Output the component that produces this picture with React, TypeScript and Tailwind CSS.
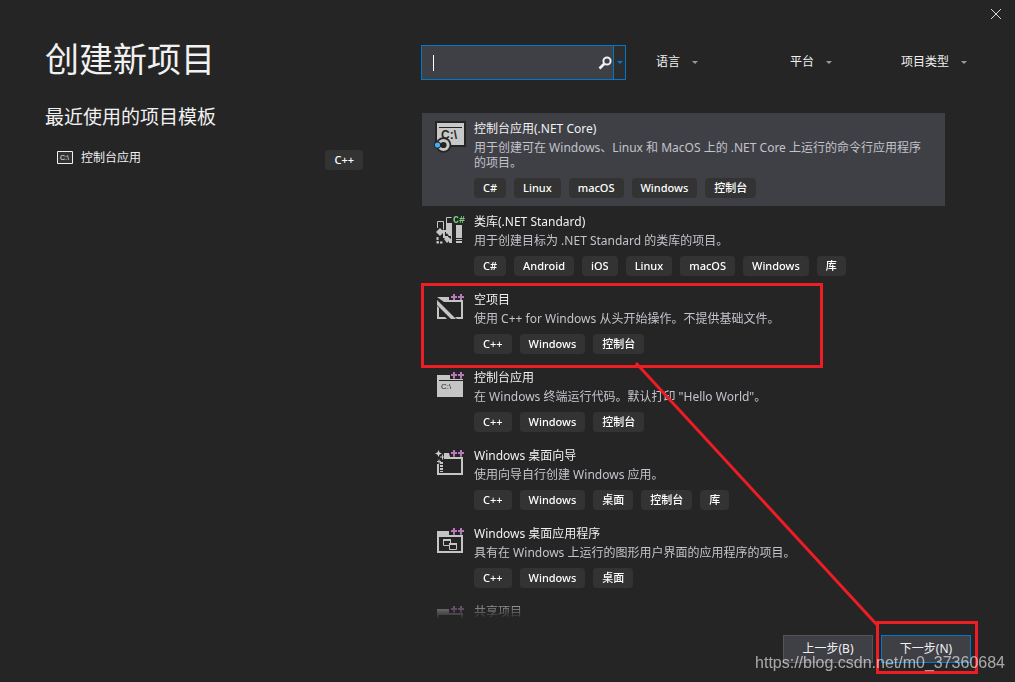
import { useState, type ReactNode } from 'react'

type IconName = 'core' | 'library' | 'empty' | 'console' | 'wizard' | 'desktop' | 'shared'

interface Template {
  icon: IconName
  name: string
  description: string
  tags: string[]
}

const TEMPLATES: Template[] = [
  {
    icon: 'core',
    name: '控制台应用(.NET Core)',
    description: '用于创建可在 Windows、Linux 和 MacOS 上的 .NET Core 上运行的命令行应用程序的项目。',
    tags: ['C#', 'Linux', 'macOS', 'Windows', '控制台'],
  },
  {
    icon: 'library',
    name: '类库(.NET Standard)',
    description: '用于创建目标为 .NET Standard 的类库的项目。',
    tags: ['C#', 'Android', 'iOS', 'Linux', 'macOS', 'Windows', '库'],
  },
  {
    icon: 'empty',
    name: '空项目',
    description: '使用 C++ for Windows 从头开始操作。不提供基础文件。',
    tags: ['C++', 'Windows', '控制台'],
  },
  {
    icon: 'console',
    name: '控制台应用',
    description: '在 Windows 终端运行代码。默认打印 "Hello World"。',
    tags: ['C++', 'Windows', '控制台'],
  },
  {
    icon: 'wizard',
    name: 'Windows 桌面向导',
    description: '使用向导自行创建 Windows 应用。',
    tags: ['C++', 'Windows', '桌面', '控制台', '库'],
  },
  {
    icon: 'desktop',
    name: 'Windows 桌面应用程序',
    description: '具有在 Windows 上运行的图形用户界面的应用程序的项目。',
    tags: ['C++', 'Windows', '桌面'],
  },
  {
    icon: 'shared',
    name: '共享项目',
    description: '',
    tags: [],
  },
]

const FILTERS = ['语言', '平台', '项目类型']

function PlusPlus() {
  return (
    <g>
      <path d="M19 2h2v2h2v2h-2v2h-2v-2h-2v-2h2zM26 2h2v2h2v2h-2v2h-2v-2h-2v-2h2z" fill="#b978bd" />
      <path d="M20 8v2M27 8v2" stroke="#c5c5c5" strokeDasharray="1 1" />
    </g>
  )
}

const ICONS: Record<IconName, ReactNode> = {
  core: (
    <>
      <path d="M1 0h31v26h-31z" fill="#252526" />
      <path d="M3 2h27v22h-27z" fill="#c8c8c8" />
      <path d="M5 6.500h23" stroke="#252526" />
      <text x="7" y="18" fontSize="12" fontWeight="700" fill="#252526" className="font-['Liberation_Sans']">
        C:\
      </text>
      <circle cx="9.500" cy="24" r="7.800" fill="#252526" />
      <circle cx="9.500" cy="24" r="4.600" fill="none" stroke="#c8c8c8" strokeWidth="3" />
      <circle cx="3.500" cy="24" r="3.600" fill="#252526" />
      <circle cx="3.500" cy="24" r="2.600" fill="#3db2f5" />
    </>
  ),
  library: (
    <>
      <path d="M3.500 14v-6.500h6v8" fill="none" stroke="#c5c5c5" />
      <path d="M12.500 12v-8.500h5" fill="none" stroke="#c5c5c5" />
      <path d="M12 9h6v20h-3v-4h2v-3h-2l-3-4z" fill="#c5c5c5" />
      <path d="M22 11h6v18h-6z" fill="#c5c5c5" />
      <path d="M22 24.500h6M22 26.500h6" stroke="#252526" />
      <path d="M6 14l4 4-4 4-4-4z" fill="#c5c5c5" />
      <path d="M8 17h5M10 18v5h4" fill="none" stroke="#c5c5c5" strokeWidth="2" />
      <path d="M12 14l4 3-4 3zM13 22l4 3-4 4-3-4z" fill="#c5c5c5" />
      <path d="M3.500 23v5.500h5" fill="none" stroke="#c5c5c5" strokeWidth="2" strokeDasharray="3 1" />
      <text x="19" y="9" fontSize="10" fontWeight="700" fill="#7bd07b" className="font-['Liberation_Mono']">
        C#
      </text>
    </>
  ),
  empty: (
    <>
      <path d="M3 5h12v3h14v19h-6l-2-2h6v-15h-17zM3 14l2 2v9h6l2 2h-10z" fill="#c5c5c5" />
      <path d="M3 8l19 19h-5l-14-14z" fill="#c5c5c5" />
      <path d="M16 1h15v7h-15z" fill="#252526" />
      <PlusPlus />
    </>
  ),
  console: (
    <>
      <path d="M3 5h13v4h13v18h-26z" fill="#c5c5c5" />
      <path d="M5 10.500h24" stroke="#252526" />
      <text x="7" y="19" fontSize="8" fill="#252526" className="font-['Liberation_Sans']">
        C:\
      </text>
      <PlusPlus />
    </>
  ),
  wizard: (
    <>
      <path d="M10 5h5l1 4h13v18h-26v-11h2v9h22v-14h-17z" fill="#c5c5c5" />
      <path d="M4.500 2l1 2.500 2.500 1-2.500 1-1 2.500-1-2.500-2.500-1 2.500-1z" fill="#d6d6d6" />
      <path d="M8.500 6.500v5M6 9h5M5 11.500v4M3 13.500h4" stroke="#c5c5c5" />
      <path d="M7.500 14v10" stroke="#c5c5c5" strokeWidth="3" strokeDasharray="2 1" />
      <PlusPlus />
    </>
  ),
  desktop: (
    <>
      <path d="M3 5h12v4h14v18h-26zM5 11v14h22v-14z" fill="#c5c5c5" fillRule="evenodd" />
      <path d="M9.500 13.500h7v6h-7z" fill="none" stroke="#c5c5c5" />
      <path d="M15.500 17.500h7v6h-7z" fill="#252526" stroke="#c5c5c5" />
      <path d="M9 14h8M15 18h8" stroke="#c5c5c5" strokeWidth="2" />
      <PlusPlus />
    </>
  ),
  shared: (
    <>
      <path d="M3 5h12v4h14v18h-26zM5 11v14h22v-14z" fill="#c5c5c5" fillRule="evenodd" />
      <PlusPlus />
    </>
  ),
}

function Tag({ label }: { label: string }) {
  return (
    <span className="h-5 px-[9px] rounded bg-[#333334] text-white text-[11px] leading-5 font-medium text-center whitespace-nowrap">
      {label}
    </span>
  )
}

function TemplateRow({ item, selected, onSelect }: { item: Template; selected: boolean; onSelect: () => void }) {
  return (
    <li>
      <button
        type="button"
        aria-pressed={selected}
        onClick={onSelect}
        className={`w-full flex items-start gap-2 pl-3 pr-4 py-2 text-left ${selected ? 'bg-[#3f4046]' : ''}`}
      >
        <svg viewBox="0 0 32 32" className="size-8 shrink-0" aria-hidden="true">
          {ICONS[item.icon]}
        </svg>
        <span className="flex-1 flex flex-col">
          <span className="text-xs leading-4 text-[#f1f1f1]">{item.name}</span>
          <span className="mt-[3px] text-xs leading-[15px] text-[#c3c3cb]">{item.description}</span>
          <span className="mt-2 flex gap-2">
            {item.tags.map((tag) => (
              <Tag key={tag} label={tag} />
            ))}
          </span>
        </span>
      </button>
    </li>
  )
}

export default function App() {
  const [selected, setSelected] = useState(0)
  const [query, setQuery] = useState('')

  return (
    <div className="relative h-screen flex flex-col overflow-hidden bg-[#252526] text-[#f1f1f1] font-['Noto_Sans','Noto_Sans_CJK_SC',sans-serif]">
      {/* Title bar */}
      <header className="h-7 flex shrink-0 items-center justify-end pr-[13px]">
        <button type="button" aria-label="关闭">
          <svg viewBox="0 0 12 12" className="size-3" aria-hidden="true">
            <path d="M1 1l10 10M11 1l-10 10" stroke="#d8d8d8" />
          </svg>
        </button>
      </header>

      <main className="flex flex-1 min-h-0 pl-[45px]">
        {/* Recent templates */}
        <aside className="w-[318px] mr-[58px] shrink-0">
          <h1 className="mt-[11px] text-[34px] leading-10">创建新项目</h1>
          <h2 className="mt-6 text-[19px] leading-7">最近使用的项目模板</h2>
          <button type="button" className="mt-[19px] w-full flex items-start pl-3 text-left">
            <svg viewBox="0 0 16 14" className="w-4 h-[14px] mr-2" aria-hidden="true">
              <path d="M.5 1.500h15v12h-15z" fill="#333" stroke="#f1f1f1" />
              <text x="3" y="10" fontSize="7" fill="#f1f1f1" className="font-['Liberation_Sans']">
                C:\
              </text>
            </svg>
            <span className="flex-1 text-xs leading-4">控制台应用</span>
            <Tag label="C++" />
          </button>
        </aside>

        <section className="flex-1 min-w-0 flex flex-col">
          {/* Search and filters */}
          <div className="mt-[17px] flex items-start">
            <div className="w-[205px] h-[35px] shrink-0 flex items-center border border-[#0079cc] bg-[#3f4046]">
              <span className="ml-[11px] w-px h-4 bg-white" />
              <input
                type="text"
                aria-label="搜索模板"
                value={query}
                onChange={(e) => setQuery(e.target.value)}
                className="flex-1 min-w-0 h-full text-xs outline-none caret-transparent"
              />
              <button type="button" aria-label="搜索" className="mr-px">
                <svg viewBox="0 0 14 14" className="size-[14px]" aria-hidden="true">
                  <circle cx="9" cy="5" r="3.600" fill="none" stroke="#f1f1f1" strokeWidth="2" />
                  <path d="M6.500 7.500l-5 5" stroke="#f1f1f1" strokeWidth="2.600" />
                </svg>
              </button>
              <button
                type="button"
                aria-label="搜索选项"
                className="w-3 h-full flex items-center justify-center border-l border-[#0079cc] bg-[#2d2d30]"
              >
                <svg viewBox="0 0 6 3" className="w-[6px] h-[3px]" aria-hidden="true">
                  <path d="M0 0h6l-3 3z" fill="#0079cc" />
                </svg>
              </button>
            </div>
            <div className="mt-[9px] ml-[30px] grid grid-cols-[134px_111px_auto]">
              {FILTERS.map((f) => (
                <div key={f} className="flex items-center gap-[11px]">
                  <select aria-label={f} className="appearance-none text-xs leading-4 outline-none">
                    <option>{f}</option>
                  </select>
                  <svg viewBox="0 0 6 3" className="w-[6px] h-[3px]" aria-hidden="true">
                    <path d="M0 0h6l-3 3z" fill="#999" />
                  </svg>
                </div>
              ))}
            </div>
          </div>

          {/* Template list */}
          <ul className="mt-[33px] ml-px mr-[70px] flex-1 min-h-0 overflow-hidden [mask-image:linear-gradient(to_bottom,black_calc(100%-24px),transparent)]">
            {TEMPLATES.map((item, i) => (
              <TemplateRow key={item.name} item={item} selected={i === selected} onSelect={() => setSelected(i)} />
            ))}
          </ul>
        </section>
      </main>

      {/* Footer */}
      <footer className="mt-4 mb-[19px] pr-11 flex shrink-0 justify-end gap-2">
        <button type="button" className="w-[90px] h-7 border border-[#555558] bg-[#3f4046] text-xs">
          上一步(B)
        </button>
        <button type="button" className="w-[90px] h-7 border border-[#0079cc] bg-[#3f4046] text-xs">
          下一步(N)
        </button>
      </footer>

      {/* Hand-drawn marks over the dialog */}
      <svg
        viewBox="0 0 1015 682"
        className="absolute top-0 left-0 w-[1015px] h-[682px] pointer-events-none"
        fill="none"
        stroke="#ee1c24"
        strokeWidth="3"
        aria-hidden="true"
      >
        <path d="M422.500 284.500h399v82h-399zM877.500 622.500h99v50h-99z" />
        <path d="M636 363l242 263" />
      </svg>
      <p className="absolute right-[10px] bottom-[7px] text-base leading-6 text-white/60 font-['Liberation_Sans',sans-serif]">
        https://blog.csdn.net/m0_37360684
      </p>
    </div>
  )
}
